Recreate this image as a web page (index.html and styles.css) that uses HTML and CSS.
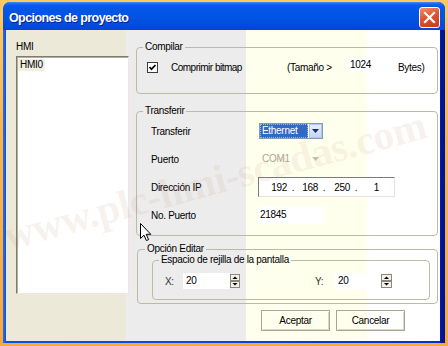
FILE: index.html
```html
<!DOCTYPE html>
<html lang="es">
<head>
<meta charset="utf-8">
<title>Opciones de proyecto</title>
<link rel="stylesheet" href="styles.css">
</head>
<body>
<div class="window">
  <div class="titlebar">
    <span class="title">Opciones de proyecto</span>
    <button class="close" aria-label="Cerrar"><svg width="19" height="19" viewBox="0 0 19 19"><path d="M5 5 L14 14 M14 5 L5 14" stroke="#fff" stroke-width="2.2" stroke-linecap="square"/></svg></button>
  </div>
  <div class="client">
    <div class="left">
      <div class="label">HMI</div>
      <div class="listbox"><span class="item">HMI0</span></div>
    </div>
    <div class="right">
      <fieldset class="group g-compilar">
        <legend>Compilar</legend>
        <div class="compile-row">
          <label class="chk"><span class="box"><svg width="9" height="9" viewBox="0 0 9 9"><path d="M1.5 4 L3.5 6.2 L7.5 2" fill="none" stroke="#000" stroke-width="1.7"/></svg></span>Comprimir bitmap</label>
          <span class="size-label">(Tamaño &gt;</span>
          <span class="size-box">1024</span>
          <span class="bytes">Bytes)</span>
        </div>
      </fieldset>
      <fieldset class="group g-transfer">
        <legend>Transferir</legend>
        <div class="form-grid">
          <span>Transferir</span>
          <div class="combo"><span class="sel">Ethernet</span><span class="drop"><svg width="7" height="4" viewBox="0 0 7 4"><path d="M0 0 H7 L3.5 4 Z" fill="#1B2F5E"/></svg></span></div>
          <span>Puerto</span>
          <div class="combo disabled"><span class="val">COM1</span><span class="drop"><svg width="7" height="4" viewBox="0 0 7 4"><path d="M0 0 H7 L3.5 4 Z" fill="#C4C2B4"/></svg></span></div>
          <span>Dirección IP</span>
          <div class="ip"><span class="oct o1">192</span><span class="dot">.</span><span class="oct o2">168</span><span class="dot">.</span><span class="oct o3">250</span><span class="dot">.</span><span class="oct o4">1</span></div>
          <span>No. Puerto</span>
          <div class="port">21845</div>
        </div>
      </fieldset>
      <fieldset class="group g-edit">
        <legend>Opción Editar</legend>
        <fieldset class="group g-grid">
          <legend>Espacio de rejilla de la pantalla</legend>
          <div class="spin-row">
            <div class="spin-field x"><span class="axis">X:</span><span class="num">20</span><svg class="spin" width="10" height="14" viewBox="0 0 10 14"><rect x="0.5" y="0.5" width="9" height="6" fill="#F1F0EA" stroke="#8C897C"/><rect x="0.5" y="7.5" width="9" height="6" fill="#F1F0EA" stroke="#8C897C"/><path d="M2.5 5 L5 2.5 L7.5 5 Z" fill="#000"/><path d="M2.5 9 L7.5 9 L5 11.5 Z" fill="#000"/></svg></div>
            <div class="spin-field y"><span class="axis">Y:</span><span class="num">20</span><svg class="spin" width="11" height="14" viewBox="0 0 11 14"><rect x="0.5" y="0.5" width="10" height="6" fill="#F1F0EA" stroke="#8C897C"/><rect x="0.5" y="7.5" width="10" height="6" fill="#F1F0EA" stroke="#8C897C"/><path d="M3 5 L5.5 2.5 L8 5 Z" fill="#000"/><path d="M3 9 L8 9 L5.5 11.5 Z" fill="#000"/></svg></div>
          </div>
        </fieldset>
      </fieldset>
      <div class="buttons">
        <button class="btn">Aceptar</button>
        <button class="btn">Cancelar</button>
      </div>
    </div>
    <div class="watermark">www.plc-hmi-scadas.com</div>
    <svg class="cursor" width="12" height="19" viewBox="0 0 12 19"><path d="M0.5 0.5 L0.5 15.5 L4 12.2 L6.4 17.6 L8.6 16.6 L6.2 11.3 L10.8 11.3 Z" fill="#fff" stroke="#000" stroke-width="1" stroke-linejoin="miter"/></svg>
  </div>
</div>
</body>
</html>
```

FILE: styles.css
```css
html, body {
  margin: 0;
  padding: 0;
}

body {
  width: 448px;
  height: 346px;
  overflow: hidden;
  background: linear-gradient(180deg, #FFC864 0, #FBB24A 40%, #F9A83E 100%);
}

.window {
  margin: 2px 3px 0 3px;
  width: 442px;
  height: 341px;
  display: flex;
  flex-direction: column;
  border-radius: 7px 7px 0 0;
  overflow: hidden;
  background: linear-gradient(90deg, #2A6FEA 0, #0A52DD 3px, #0848D6 50%, #0030C4 calc(100% - 6px), #00169A calc(100% - 4px), #001290 100%);
}

.titlebar {
  height: 28px;
  flex: none;
  box-sizing: border-box;
  display: flex;
  align-items: center;
  padding: 3px 5px 0 6px;
  background: linear-gradient(180deg, #3F8FF9 0, #1866ED 2px, #0659E8 4px, #0055E5 12px, #0050E0 20px, #0046D6 28px);
}

.title {
  flex: 1;
  color: #fff;
  font: bold 12.5px "Liberation Sans", Arial, sans-serif;
  letter-spacing: -0.6px;
  text-shadow: 1px 1px 0 #0B1F8E;
}

.close {
  width: 21px;
  height: 21px;
  padding: 0;
  box-sizing: border-box;
  border: 1px solid #fff;
  border-radius: 3px;
  background: linear-gradient(160deg, #F0906E 0, #E2532F 45%, #C8381B 100%);
  display: flex;
  align-items: center;
  justify-content: center;
}

.client {
  flex: 1;
  position: relative;
  display: flex;
  margin: 0 5px 2px 3px;
  background: linear-gradient(90deg, #ECE9D8 0 120px, #ECECEC 120px 240px, #FFFFEE 240px 361px, #FFFFFF 361px);
  font: 10px "Liberation Sans", Arial, sans-serif;
  letter-spacing: -0.3px;
  color: #000;
  overflow: hidden;
}

.left {
  flex: none;
  width: 113px;
  padding: 11px 0 0 10px;
}

.label {
  height: 12px;
  line-height: 12px;
}

.listbox {
  margin-top: 3px;
  height: 238px;
  box-sizing: border-box;
  background: #fff;
  border-top: 1px solid #7D7A6E;
  border-left: 1px solid #7D7A6E;
  border-right: 1px solid #F5E2E2;
  border-bottom: 1px solid #F5E2E2;
  box-shadow: inset 1px 1px 0 #B3B0A2;
  padding: 2px 0 0 1px;
}

.item {
  display: inline-block;
  line-height: 12px;
  padding: 0 2px;
  background: #F2F0E3;
}

.right {
  flex: none;
  width: 302px;
  margin-left: 7px;
  padding-top: 11px;
  display: flex;
  flex-direction: column;
}

.group {
  margin: 0;
  border: 1px solid #BDBAA4;
  border-radius: 4px;
  min-width: 0;
}

.group legend {
  padding: 0 2px;
  line-height: 12px;
}

.g-compilar {
  padding: 7px 4px 19px 10px;
}

.g-compilar > legend {
  margin-left: -4px;
}

.g-transfer {
  margin-top: 11px;
  padding: 4px 8px 10px 14px;
}

.g-transfer > legend {
  margin-left: -8px;
}

.g-edit {
  margin-top: 7px;
  margin-left: 1px;
  padding: 0 7px 3px 14px;
}

.g-edit > legend {
  margin-left: -7px;
}

.g-grid {
  margin-top: -1px;
  padding: 7px 8px 10px 12px;
}

.g-grid > legend {
  margin-left: -6px;
}

.compile-row {
  display: flex;
  align-items: center;
  height: 14px;
}

.chk {
  width: 140px;
  display: flex;
  align-items: center;
  gap: 13px;
  letter-spacing: -0.5px;
}

.box {
  width: 11px;
  height: 11px;
  box-sizing: border-box;
  border: 1px solid #3B3B3B;
  background: #fff;
  display: flex;
  align-items: center;
  justify-content: center;
}

.size-label {
  width: 60px;
}

.size-box {
  width: 48px;
  height: 14px;
  box-sizing: border-box;
  line-height: 14px;
  padding-left: 3px;
  background: #fff;
  margin-bottom: 4px;
}

.bytes {
  margin-left: 3px;
}

.form-grid {
  display: grid;
  grid-template-columns: 108px 1fr;
  grid-auto-rows: 20px;
  row-gap: 8px;
  align-items: center;
}

.combo {
  width: 64px;
  height: 16px;
  box-sizing: border-box;
  border: 1px solid #7F9DB9;
  background: #fff;
  display: flex;
}

.combo .sel {
  width: 48px;
  background: #316AC5;
  color: #fff;
  line-height: 14px;
  padding-left: 2px;
  box-sizing: border-box;
  outline: 1px dotted #9BB4E0;
  outline-offset: -1px;
}

.combo .drop {
  margin-left: auto;
  width: 13px;
  box-sizing: border-box;
  background: linear-gradient(180deg, #E6EEFD 0, #C6D6F8 100%);
  border: 1px solid #B4C6F0;
  display: flex;
  align-items: center;
  justify-content: center;
}

.combo.disabled {
  border-color: transparent;
  background: transparent;
  color: #ACA899;
}

.combo.disabled .val {
  line-height: 14px;
  padding-left: 2px;
}

.combo.disabled .drop {
  background: transparent;
  border-color: transparent;
}

.ip {
  margin-left: -1px;
  width: 137px;
  height: 20px;
  box-sizing: border-box;
  background: #fff;
  border-top: 1px solid #7A7A7A;
  border-left: 1px solid #7A7A7A;
  border-right: 1px solid #F0DCDC;
  border-bottom: 1px solid #F0DCDC;
  display: flex;
  align-items: center;
}

.oct {
  text-align: right;
}

.o1 { width: 28px; }
.o2 { width: 19px; }
.o3 { width: 20px; }
.o4 { width: 17px; }

.dot {
  width: 12px;
  text-align: center;
}

.port {
  margin-left: -1px;
  width: 65px;
  height: 18px;
  box-sizing: border-box;
  line-height: 18px;
  padding-left: 2px;
  background: #fff;
}

.spin-row {
  display: flex;
  align-items: center;
  height: 16px;
}

.spin-field {
  display: flex;
  align-items: center;
}

.axis {
  width: 18px;
  color: #333;
}

.num {
  width: 47px;
  height: 16px;
  box-sizing: border-box;
  line-height: 16px;
  padding-left: 3px;
  background: #fff;
}

.spin-field.y {
  margin-left: 75px;
}

.spin-field.y .axis {
  width: 20px;
}

.spin-field.y .num {
  width: 46px;
}

.buttons {
  margin-top: 6px;
  display: flex;
  justify-content: flex-end;
  gap: 6px;
  padding-right: 33px;
}

.btn {
  width: 69px;
  height: 21px;
  box-sizing: border-box;
  padding: 0;
  border: 1px solid #A9A694;
  background: transparent;
  box-shadow: inset 1px 1px 0 #fff, inset -1px -1px 0 #DAD7C8;
  font: 10px "Liberation Sans", Arial, sans-serif;
  letter-spacing: -0.3px;
  color: #000;
}

.watermark {
  position: absolute;
  left: 2px;
  top: 186px;
  font: bold 41px "Liberation Serif", serif;
  line-height: 40px;
  white-space: nowrap;
  color: rgba(190, 120, 90, 0.11);
  transform-origin: 0 33px;
  transform: rotate(-15deg);
  pointer-events: none;
}

.cursor {
  position: absolute;
  left: 134px;
  top: 193px;
}
```
